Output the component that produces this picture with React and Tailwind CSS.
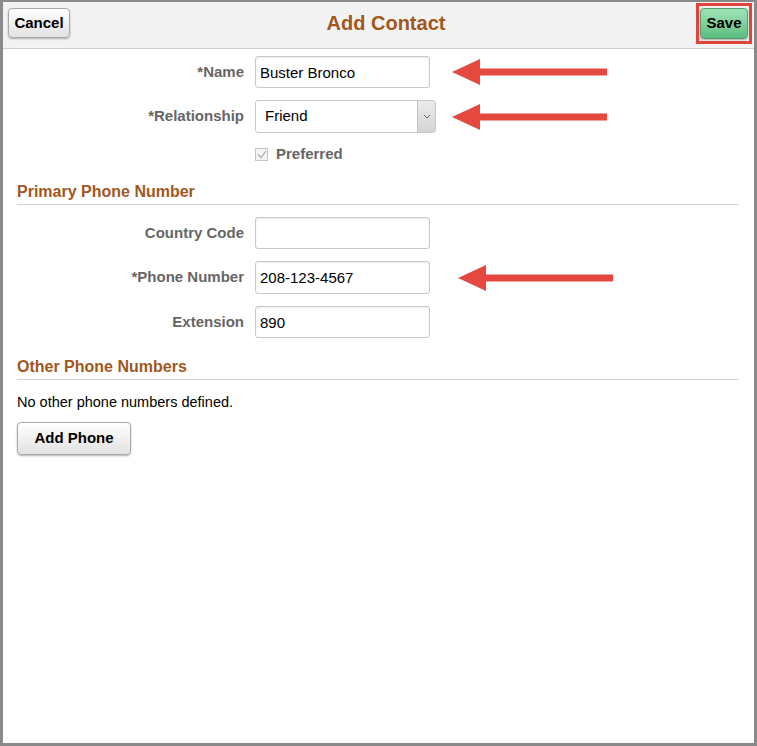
const font = { fontFamily: '"Liberation Sans", Arial, sans-serif' };

const labelCls = "w-[252px] pr-[11px] text-right text-[15px] font-bold text-[#666]";
const inputCls = "w-[175px] border border-[#c8c8c8] rounded-[3px] bg-white px-[4px] text-[15px] text-black shadow-[inset_0_1px_2px_rgba(0,0,0,0.08)] focus:outline-none";

function Arrow({ width = 155 }) {
    return (
        <svg width={width} height="28" viewBox={`0 0 ${width} 28`} className="shrink-0">
            <polygon points="0,14 28,1 28,27" fill="#e5483f" />
            <rect x="26" y="10.5" width={width - 26} height="7" fill="#e5483f" />
        </svg>
    );
}

function FieldRow({ label, value, arrow, arrowGap, height = "h-[32px]", className = "" }) {
    return (
        <div className={`flex items-center ${className}`}>
            <div className={labelCls}>{label}</div>
            <input type="text" defaultValue={value} className={`${inputCls} ${height}`} />
            {arrow && (
                <div className={arrowGap}>
                    <Arrow />
                </div>
            )}
        </div>
    );
}

export default function App() {
    return (
        <div style={font} className="w-[757px] h-[746px] bg-white border-t-2 border-l-[3px] border-r-[3px] border-b-[3px] border-[#8a8a8a] flex flex-col">
            {/* Header */}
            <div className="h-[47px] bg-[#f3f3f3] border-b border-[#cfcfcf] flex items-start">
                <button className="ml-[5px] mt-[6px] w-[62px] h-[30px] rounded-[4px] border border-[#a9a9a9] bg-gradient-to-b from-white to-[#e2e2e2] shadow-[0_1px_2px_rgba(0,0,0,0.3)] text-[15px] font-bold text-black">
                    Cancel
                </button>
                <div className="flex-1 text-center mt-[6px] pl-[6px] text-[20px] font-bold text-[#a2571d]">
                    Add Contact
                </div>
                <div className="mr-[2px] mt-[1px] w-[56px] h-[41px] border-[3px] border-[#e0443c] flex items-center justify-center">
                    <button className="w-[48px] h-[31px] rounded-[4px] border border-[#4f9f6c] bg-gradient-to-b from-[#9fe3b8] to-[#5cbd7f] shadow-[0_1px_2px_rgba(0,0,0,0.3)] text-[15px] font-bold text-black">
                        Save
                    </button>
                </div>
            </div>

            {/* Contact fields */}
            <FieldRow label="*Name" value="Buster Bronco" arrow arrowGap="ml-[22px]" className="mt-[7px]" />

            <div className="flex items-center mt-[12px]">
                <div className={labelCls}>*Relationship</div>
                <div className="w-[181px] h-[33px] border border-[#c8c8c8] rounded-[3px] bg-white flex items-center">
                    <span className="pl-[9px] text-[15px] text-black flex-1">Friend</span>
                    <span className="w-[18px] h-full border-l border-[#c2c2c2] bg-gradient-to-b from-[#ececec] to-[#d4d4d4] flex items-center justify-center rounded-r-[2px]">
                        <svg width="8" height="5" viewBox="0 0 8 5">
                            <polyline points="1,1 4,4 7,1" fill="none" stroke="#666" strokeWidth="1" />
                        </svg>
                    </span>
                </div>
                <div className="ml-[16px]">
                    <Arrow />
                </div>
            </div>

            <div className="flex items-center mt-[13px] h-[16px]">
                <div className="w-[252px]" />
                <span className="w-[13px] h-[13px] border border-[#c4c4c4] bg-[#f4f4f4] flex items-center justify-center">
                    <svg width="10" height="9" viewBox="0 0 10 9">
                        <polyline points="1,4.5 4,7.5 9,1" fill="none" stroke="#a8a8a8" strokeWidth="1.2" />
                    </svg>
                </span>
                <span className="ml-[8px] text-[15px] font-bold text-[#666]">Preferred</span>
            </div>

            {/* Primary phone */}
            <div className="mt-[20px] ml-[14px] mr-[16px] pb-[2px] border-b border-[#cfcfcf] text-[16px] leading-[20px] font-bold text-[#a2571d]">
                Primary Phone Number
            </div>

            <FieldRow label="Country Code" value="" className="mt-[12px]" />
            <FieldRow label="*Phone Number" value="208-123-4567" arrow arrowGap="ml-[28px]" height="h-[33px]" className="mt-[12px]" />
            <FieldRow label="Extension" value="890" className="mt-[12px]" />

            {/* Other phones */}
            <div className="mt-[19px] ml-[14px] mr-[16px] pb-[2px] border-b border-[#cfcfcf] text-[16px] leading-[20px] font-bold text-[#a2571d]">
                Other Phone Numbers
            </div>

            <div className="mt-[13px] ml-[14px] text-[14.5px] leading-[18px] text-black">
                No other phone numbers defined.
            </div>

            <div className="ml-[14px] mt-[11px]">
                <button className="w-[114px] h-[33px] rounded-[4px] border border-[#a9a9a9] bg-gradient-to-b from-white to-[#e2e2e2] shadow-[0_1px_2px_rgba(0,0,0,0.3)] text-[15px] font-bold text-black">
                    Add Phone
                </button>
            </div>
        </div>
    );
}
